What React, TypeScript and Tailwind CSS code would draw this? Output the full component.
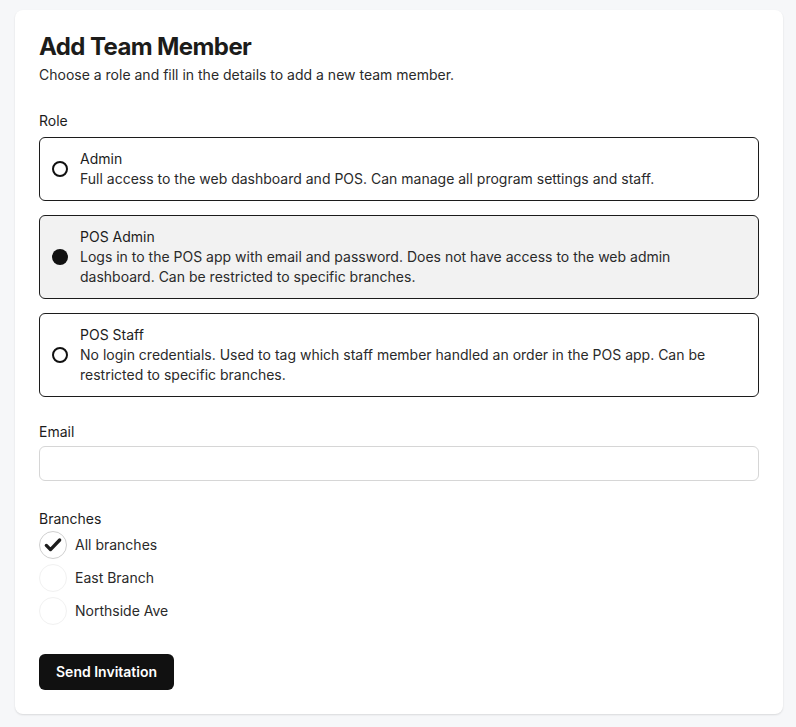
import { useState } from 'react';

const ROLES = [
  { id: 'admin', name: 'Admin', desc: 'Full access to the web dashboard and POS. Can manage all program settings and staff.' },
  { id: 'posadmin', name: 'POS Admin', desc: 'Logs in to the POS app with email and password. Does not have access to the web admin dashboard. Can be restricted to specific branches.' },
  { id: 'posstaff', name: 'POS Staff', desc: 'No login credentials. Used to tag which staff member handled an order in the POS app. Can be restricted to specific branches.' },
];

const BRANCHES = ['All branches', 'East Branch', 'Northside Ave'];

export default function App() {
  const [role, setRole] = useState('posadmin');
  const [checked, setChecked] = useState<string[]>(['All branches']);

  return (
    <div className="min-h-[727px] bg-[#f6f7f9] pl-[15px] pr-[13px] pt-[10px] pb-[15px] text-[#1c1c1c]" style={{ fontFamily: 'Inter, "Noto Sans", sans-serif' }}>
      <div className="bg-white rounded-lg shadow-[0_1px_2px_rgba(0,0,0,0.12)] px-6 pt-[22px] pb-6">
        <h1 className="text-2xl font-bold leading-[30px] tracking-tight text-[#1c1c1a]">Add Team Member</h1>
        <p className="text-sm mt-[3px] leading-5 text-[#2a2a2a]">Choose a role and fill in the details to add a new team member.</p>

        <div className="mt-[26px] text-sm leading-5">Role</div>
        <div className="mt-[6px] flex flex-col gap-[14px]">
          {ROLES.map((r) => {
            const sel = role === r.id;
            return (
              <button
                key={r.id}
                onClick={() => setRole(r.id)}
                className={`flex items-center gap-3 text-left border border-[#1c1c1c] rounded-md pl-3 pr-4 py-[11px] ${sel ? 'bg-[#f2f2f2]' : 'bg-white'}`}
              >
                <span className={`w-4 h-4 rounded-full flex-shrink-0 ${sel ? 'bg-[#111]' : 'border-2 border-[#111]'}`} />
                <span className="flex flex-col">
                  <span className="text-sm leading-5">{r.name}</span>
                  <span className="text-sm leading-5 text-[#2a2a2a]">{r.desc}</span>
                </span>
              </button>
            );
          })}
        </div>

        <div className="mt-[25px] text-sm leading-5">Email</div>
        <input type="email" className="mt-[4px] w-full h-[35px] border border-[#d6d6d6] rounded-md px-3 text-sm outline-none" />

        <div className="mt-[28px] text-sm leading-5">Branches</div>
        <div className="mt-[2px] flex flex-col gap-[5px]">
          {BRANCHES.map((b) => {
            const on = checked.includes(b);
            return (
              <label key={b} className="flex items-center gap-2 cursor-pointer" onClick={() => setChecked(on ? checked.filter((x) => x !== b) : [...checked, b])}>
                <span className={`w-[28px] h-[28px] rounded-full flex items-center justify-center border ${on ? 'border-[#cfcfcf]' : 'border-[#f1f1f1]'}`}>
                  {on && (
                    <svg width="20" height="20" viewBox="0 0 24 24" fill="none" stroke="#1c1c1c" strokeWidth="4" strokeLinecap="round" strokeLinejoin="round">
                      <path d="M4 12.5l5 5L20 6" />
                    </svg>
                  )}
                </span>
                <span className="text-sm text-[#2a2a2a]">{b}</span>
              </label>
            );
          })}
        </div>

        <button className="mt-[29px] bg-[#111] text-white text-sm font-semibold rounded-md h-[36px] px-[17px]">Send Invitation</button>
      </div>
    </div>
  );
}
